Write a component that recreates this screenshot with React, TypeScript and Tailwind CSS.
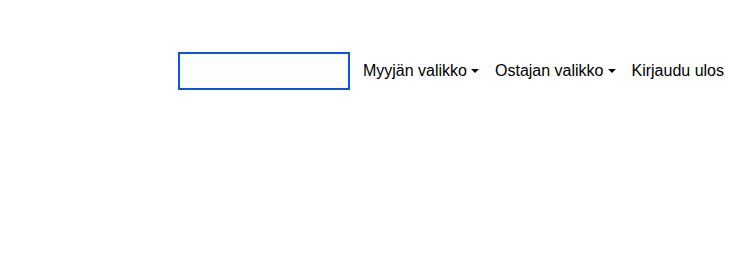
import React from "react";

function Caret() {
  return (
    <span className="ml-[4px] inline-block h-0 w-0 border-x-[4.8px] border-t-[4.8px] border-x-transparent border-t-black align-[0.255em]" />
  );
}

export default function App() {
  return (
    <div className="h-[264px] w-[743px] bg-white font-['Liberation_Sans',Arial,sans-serif] text-[16px] text-black">
      <div className="flex items-center justify-end pr-[11px] pt-[51px]">
        <input
          type="text"
          className="h-[38px] w-[172px] border-2 border-[#0a53e4] bg-white px-2 outline-none"
        />
        <nav className="ml-[5px] flex items-center">
          <a className="flex items-center px-2 py-2 leading-[24px]">
            Myyjän valikko
            <Caret />
          </a>
          <a className="flex items-center px-2 py-2 leading-[24px]">
            Ostajan valikko
            <Caret />
          </a>
          <a className="px-2 py-2 leading-[24px]">Kirjaudu ulos</a>
        </nav>
      </div>
    </div>
  );
}
